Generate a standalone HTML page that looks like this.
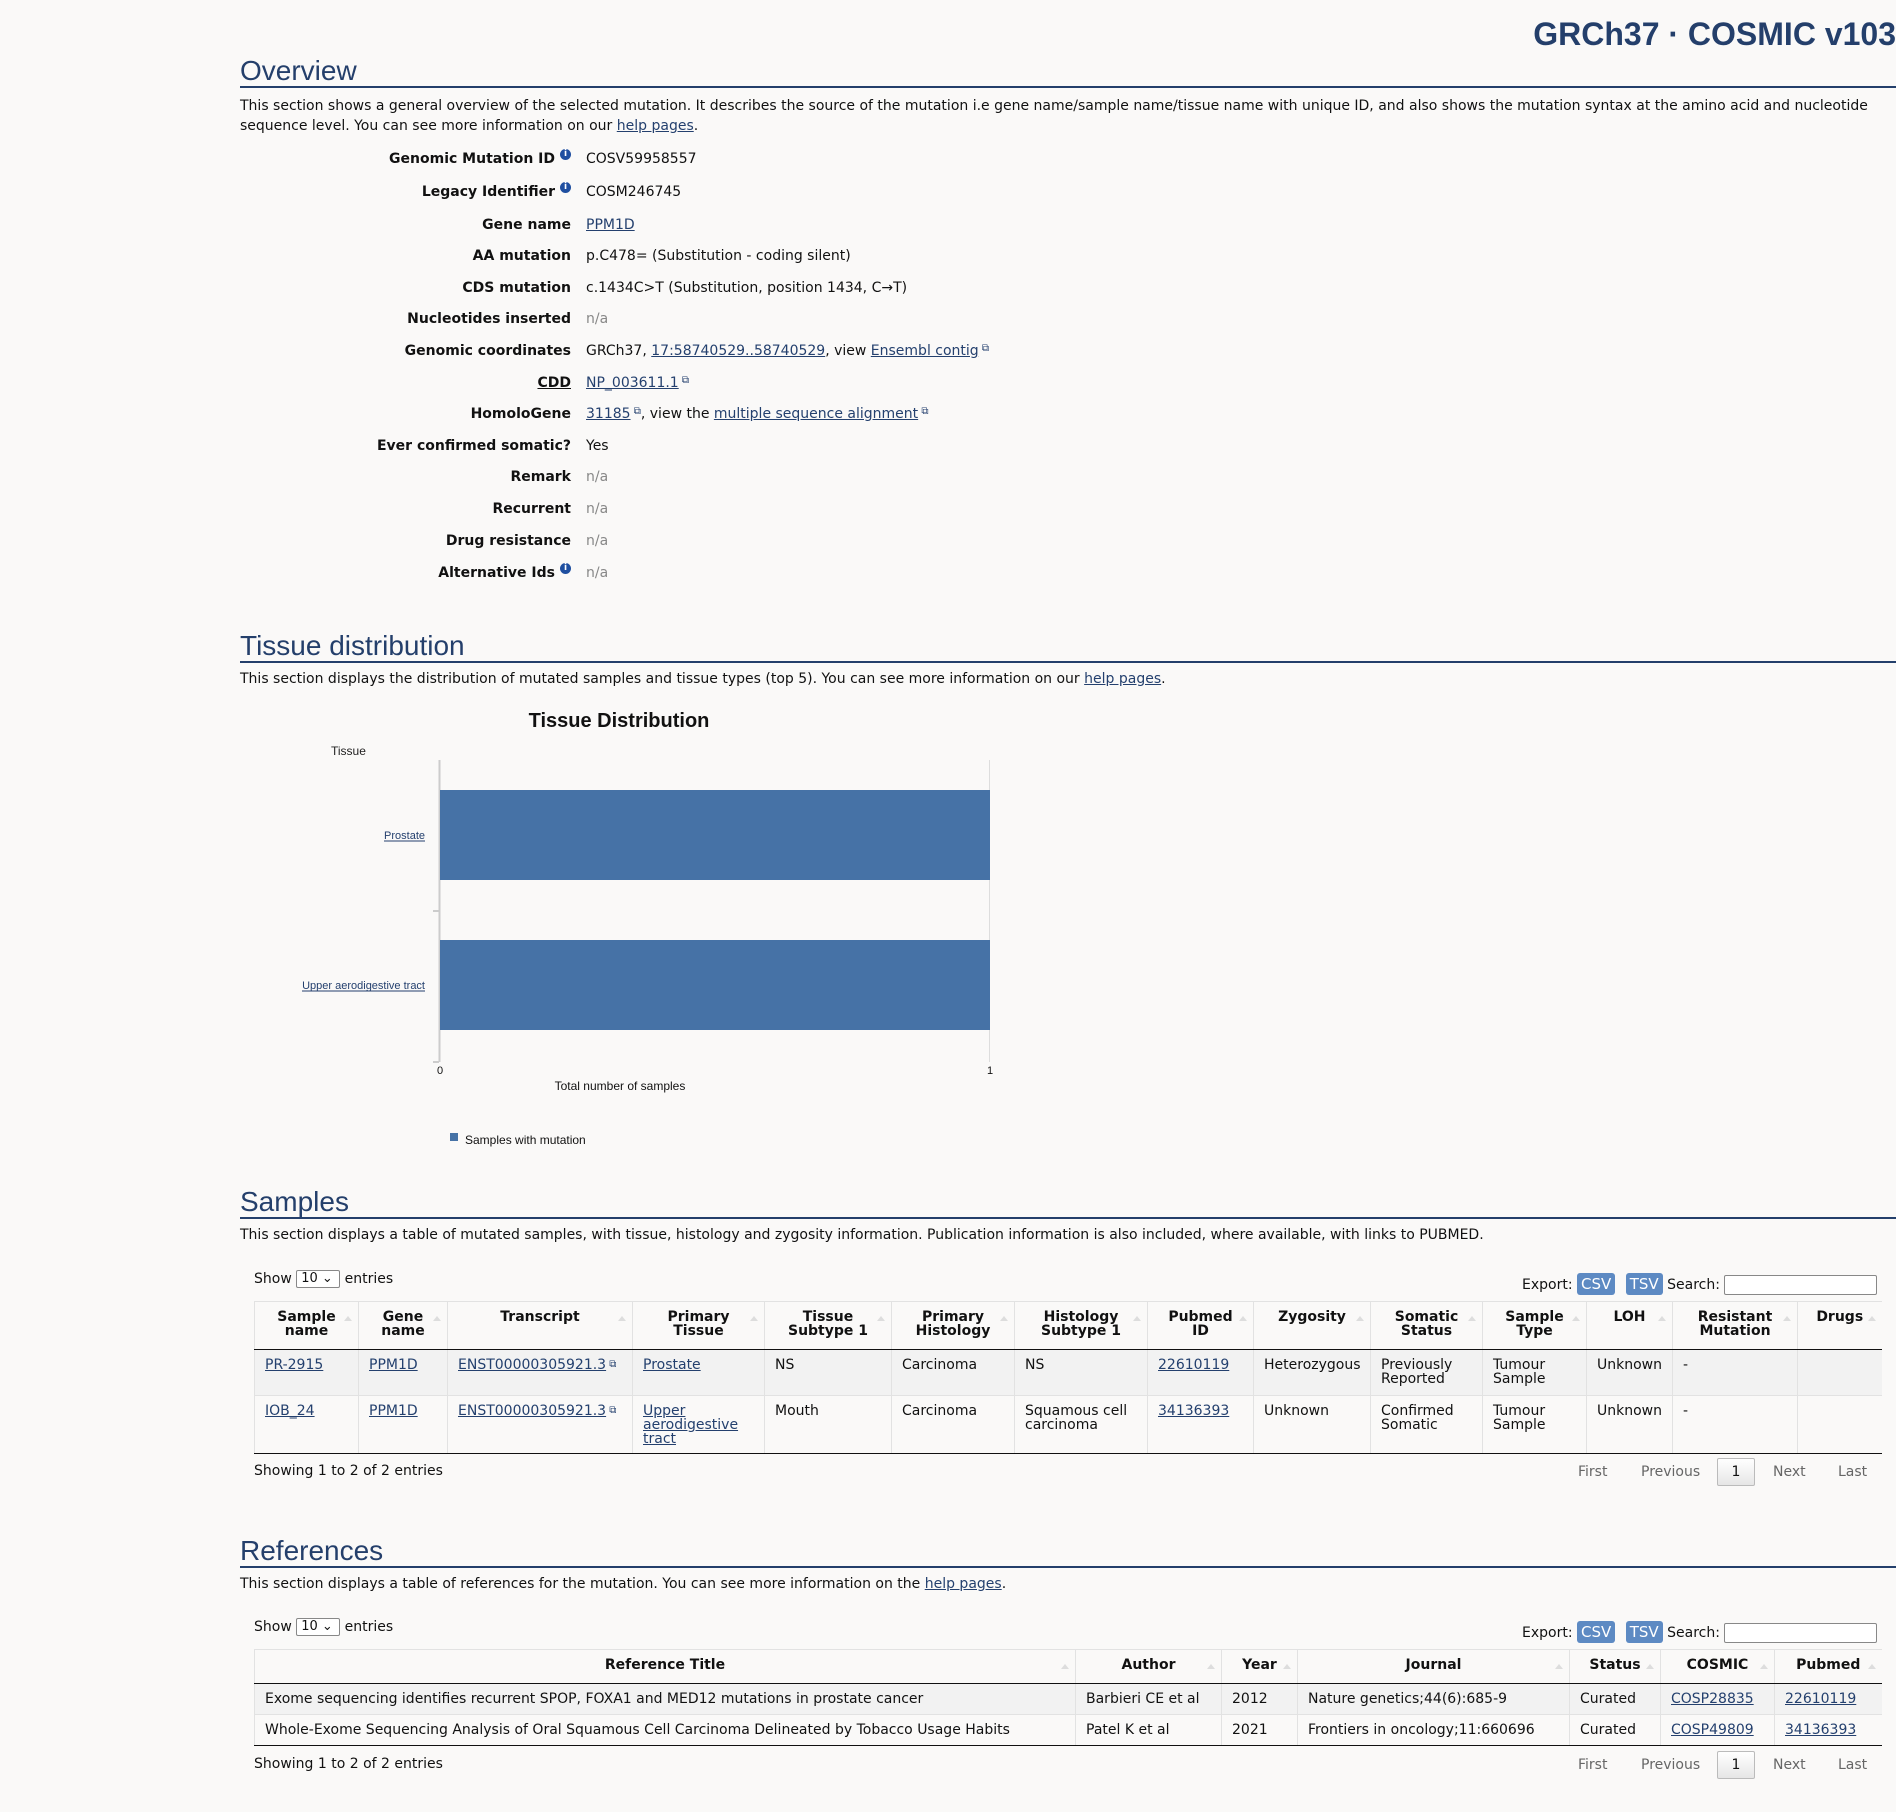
<!DOCTYPE html>
<html><head><meta charset="utf-8"><style>
*{margin:0;padding:0;box-sizing:border-box}
body{width:1896px;height:1812px;background:#faf9f8;font-family:"DejaVu Sans","Liberation Sans",sans-serif;font-size:14px;color:#111;position:relative;overflow:hidden}
.a{position:absolute;white-space:nowrap}
a{color:#24406e;text-decoration:underline}
.h{position:absolute;left:240px;right:0;font-family:"Liberation Sans",sans-serif;font-size:28px;color:#243f6b;border-bottom:2px solid #243f6b;padding-left:0;height:0}
.h span{position:absolute;left:0;bottom:1px;line-height:1}
.lab{position:absolute;right:1325px;font-weight:bold;text-align:right;white-space:nowrap}
.val{position:absolute;left:586px;white-space:nowrap}
.na{color:#888}
.i{display:inline-block;width:11px;height:11px;border-radius:50%;background:#1f4fa0;color:#fff;font-size:9px;line-height:11px;text-align:center;font-weight:bold;vertical-align:top;margin-left:5px;margin-top:-2px}
.ext{font-size:10px;color:#24406e;vertical-align:top}
table{position:absolute;border-collapse:collapse;table-layout:fixed;font-size:14px}
th{font-weight:bold;text-align:center;vertical-align:top;padding:8px 10px 0;line-height:14px;border-left:1px solid #e2e2e2;border-top:1px solid #e2e2e2;position:relative;border-bottom:1px solid #111}
th::after{content:"";position:absolute;right:6px;top:14px;width:0;height:0;border-left:4px solid transparent;border-right:4px solid transparent;border-bottom:5px solid #ddd}
td{vertical-align:top;padding:8px 10px 0;line-height:14px;border-left:1px solid #e2e2e2;border-top:1px solid #e2e2e2}
tr.g td{background:#f2f2f2}
tbody tr:last-child td{border-bottom:1px solid #111}
.btn{display:inline-block;background:#5d8ac3;color:#fff;border-radius:3px;padding:2px 4px;font-size:15px;line-height:18px}
.inp{display:inline-block;width:153px;height:20px;border:1px solid #888;background:#fff;vertical-align:middle;border-radius:2px}
.sel{display:inline-block;width:44px;height:18px;border:1px solid #888;border-radius:2px;background:#fff;font-size:13px;line-height:16px;padding-left:4px;vertical-align:middle}
.pg{color:#666;position:absolute;font-size:14px}
.pb{position:absolute;border:1px solid #bbb;background:linear-gradient(#fff,#e6e6e6);width:38px;height:28px;text-align:center;line-height:26px;border-radius:2px}
</style></head><body>

<div class="a" style="right:0;top:16px;font-family:'Liberation Sans',sans-serif;font-size:32px;color:#243f6b;font-weight:bold;letter-spacing:0px">GRCh37 · COSMIC v103</div>

<div class="h" style="top:86px"><span>Overview</span></div>
<div class="a" style="left:240px;top:96px;line-height:20px;white-space:normal;width:1650px">This section shows a general overview of the selected mutation. It describes the source of the mutation i.e gene name/sample name/tissue name with unique ID, and also shows the mutation syntax at the amino acid and nucleotide sequence level. You can see more information on our <a>help pages</a>.</div>

<div class="lab" style="top:151px">Genomic Mutation ID<span class="i">i</span></div><div class="val" style="top:151px">COSV59958557</div>
<div class="lab" style="top:184px">Legacy Identifier<span class="i">i</span></div><div class="val" style="top:184px">COSM246745</div>
<div class="lab" style="top:217px">Gene name</div><div class="val" style="top:217px"><a>PPM1D</a></div>
<div class="lab" style="top:248px">AA mutation</div><div class="val" style="top:248px">p.C478= (Substitution - coding silent)</div>
<div class="lab" style="top:280px">CDS mutation</div><div class="val" style="top:280px">c.1434C&gt;T (Substitution, position 1434, C→T)</div>
<div class="lab" style="top:311px">Nucleotides inserted</div><div class="val na" style="top:311px">n/a</div>
<div class="lab" style="top:343px">Genomic coordinates</div><div class="val" style="top:343px">GRCh37, <a>17:58740529..58740529</a>, view <a>Ensembl contig</a><span class="ext"> ⧉</span></div>
<div class="lab" style="top:375px"><u>CDD</u></div><div class="val" style="top:375px"><a>NP_003611.1</a><span class="ext"> ⧉</span></div>
<div class="lab" style="top:406px">HomoloGene</div><div class="val" style="top:406px"><a>31185</a><span class="ext"> ⧉</span>, view the <a>multiple sequence alignment</a><span class="ext"> ⧉</span></div>
<div class="lab" style="top:438px">Ever confirmed somatic?</div><div class="val" style="top:438px">Yes</div>
<div class="lab" style="top:469px">Remark</div><div class="val na" style="top:469px">n/a</div>
<div class="lab" style="top:501px">Recurrent</div><div class="val na" style="top:501px">n/a</div>
<div class="lab" style="top:533px">Drug resistance</div><div class="val na" style="top:533px">n/a</div>
<div class="lab" style="top:565px">Alternative Ids<span class="i">i</span></div><div class="val na" style="top:565px">n/a</div>

<div class="h" style="top:661px"><span>Tissue distribution</span></div>
<div class="a" style="left:240px;top:671px">This section displays the distribution of mutated samples and tissue types (top 5). You can see more information on our <a>help pages</a>.</div>

<svg class="a" style="left:0;top:0" width="1896" height="1812">
<g font-family="Liberation Sans, sans-serif">
<text x="619" y="727" font-size="20" font-weight="bold" text-anchor="middle" fill="#111">Tissue Distribution</text>
<text x="331" y="755" font-size="12" fill="#222">Tissue</text>
<line x1="439.5" y1="760" x2="439.5" y2="1062" stroke="#ccc" stroke-width="2"/>
<line x1="989.5" y1="760" x2="989.5" y2="1062" stroke="#ddd" stroke-width="1"/>
<line x1="433" y1="911" x2="439" y2="911" stroke="#ccc" stroke-width="2"/>
<line x1="433" y1="1062" x2="439" y2="1062" stroke="#ccc" stroke-width="2"/>
<rect x="440" y="790" width="550" height="90" fill="#4672a6"/>
<rect x="440" y="940" width="550" height="90" fill="#4672a6"/>
<text x="425" y="839" font-size="11" text-anchor="end" fill="#24406e">Prostate</text>
<line x1="384" y1="841" x2="425" y2="841" stroke="#24406e" stroke-width="1"/>
<text x="425" y="989" font-size="11" text-anchor="end" fill="#24406e">Upper aerodigestive tract</text>
<line x1="302" y1="991" x2="425" y2="991" stroke="#24406e" stroke-width="1"/>
<text x="440" y="1074" font-size="11" text-anchor="middle" fill="#111">0</text>
<text x="990" y="1074" font-size="11" text-anchor="middle" fill="#111">1</text>
<text x="620" y="1090" font-size="12" text-anchor="middle" fill="#111">Total number of samples</text>
<rect x="450" y="1133" width="8" height="8" fill="#4672a6"/>
<text x="465" y="1144" font-size="12" fill="#111">Samples with mutation</text>
</g></svg>

<div class="h" style="top:1217px"><span>Samples</span></div>
<div class="a" style="left:240px;top:1227px">This section displays a table of mutated samples, with tissue, histology and zygosity information. Publication information is also included, where available, with links to PUBMED.</div>

<div class="a" style="left:254px;top:1270px">Show <span class="sel">10 ⌄</span> entries</div>
<div class="a" style="left:1522px;top:1273px">Export: <span class="btn">CSV</span> <span class="btn" style="margin-left:6px">TSV</span> Search: <span class="inp"></span></div>

<table style="left:254px;top:1301px;width:1627px">
<colgroup><col style="width:104px"><col style="width:89px"><col style="width:185px"><col style="width:132px"><col style="width:127px"><col style="width:123px"><col style="width:133px"><col style="width:106px"><col style="width:117px"><col style="width:112px"><col style="width:104px"><col style="width:86px"><col style="width:125px"><col style="width:84px"></colgroup>
<thead><tr style="height:48px"><th>Sample name</th><th>Gene name</th><th>Transcript</th><th>Primary Tissue</th><th>Tissue Subtype 1</th><th>Primary Histology</th><th>Histology Subtype 1</th><th>Pubmed ID</th><th>Zygosity</th><th>Somatic Status</th><th>Sample Type</th><th>LOH</th><th>Resistant Mutation</th><th>Drugs</th></tr></thead>
<tbody>
<tr class="g" style="height:46px"><td><a>PR-2915</a></td><td><a>PPM1D</a></td><td><a>ENST00000305921.3</a><span class="ext"> ⧉</span></td><td><a>Prostate</a></td><td>NS</td><td>Carcinoma</td><td>NS</td><td><a>22610119</a></td><td>Heterozygous</td><td>Previously Reported</td><td>Tumour Sample</td><td>Unknown</td><td>-</td><td></td></tr>
<tr style="height:58px"><td><a>IOB_24</a></td><td><a>PPM1D</a></td><td><a>ENST00000305921.3</a><span class="ext"> ⧉</span></td><td><a>Upper aerodigestive tract</a></td><td>Mouth</td><td>Carcinoma</td><td>Squamous cell carcinoma</td><td><a>34136393</a></td><td>Unknown</td><td>Confirmed Somatic</td><td>Tumour Sample</td><td>Unknown</td><td>-</td><td></td></tr>
</tbody></table>

<div class="a" style="left:254px;top:1463px">Showing 1 to 2 of 2 entries</div>
<div class="pg" style="left:1578px;top:1464px">First</div>
<div class="pg" style="left:1641px;top:1464px">Previous</div>
<div class="pb" style="left:1717px;top:1458px">1</div>
<div class="pg" style="left:1773px;top:1464px">Next</div>
<div class="pg" style="left:1838px;top:1464px">Last</div>

<div class="h" style="top:1566px"><span>References</span></div>
<div class="a" style="left:240px;top:1576px">This section displays a table of references for the mutation. You can see more information on the <a>help pages</a>.</div>

<div class="a" style="left:254px;top:1618px">Show <span class="sel">10 ⌄</span> entries</div>
<div class="a" style="left:1522px;top:1621px">Export: <span class="btn">CSV</span> <span class="btn" style="margin-left:6px">TSV</span> Search: <span class="inp"></span></div>

<table style="left:254px;top:1649px;width:1627px">
<colgroup><col style="width:821px"><col style="width:146px"><col style="width:76px"><col style="width:272px"><col style="width:91px"><col style="width:114px"><col style="width:107px"></colgroup>
<thead><tr style="height:34px"><th>Reference Title</th><th>Author</th><th>Year</th><th>Journal</th><th>Status</th><th>COSMIC</th><th>Pubmed</th></tr></thead>
<tbody>
<tr class="g" style="height:31px"><td>Exome sequencing identifies recurrent SPOP, FOXA1 and MED12 mutations in prostate cancer</td><td>Barbieri CE et al</td><td>2012</td><td>Nature genetics;44(6):685-9</td><td>Curated</td><td><a>COSP28835</a></td><td><a>22610119</a></td></tr>
<tr style="height:31px"><td>Whole-Exome Sequencing Analysis of Oral Squamous Cell Carcinoma Delineated by Tobacco Usage Habits</td><td>Patel K et al</td><td>2021</td><td>Frontiers in oncology;11:660696</td><td>Curated</td><td><a>COSP49809</a></td><td><a>34136393</a></td></tr>
</tbody></table>

<div class="a" style="left:254px;top:1756px">Showing 1 to 2 of 2 entries</div>
<div class="pg" style="left:1578px;top:1757px">First</div>
<div class="pg" style="left:1641px;top:1757px">Previous</div>
<div class="pb" style="left:1717px;top:1751px">1</div>
<div class="pg" style="left:1773px;top:1757px">Next</div>
<div class="pg" style="left:1838px;top:1757px">Last</div>
</body></html>
